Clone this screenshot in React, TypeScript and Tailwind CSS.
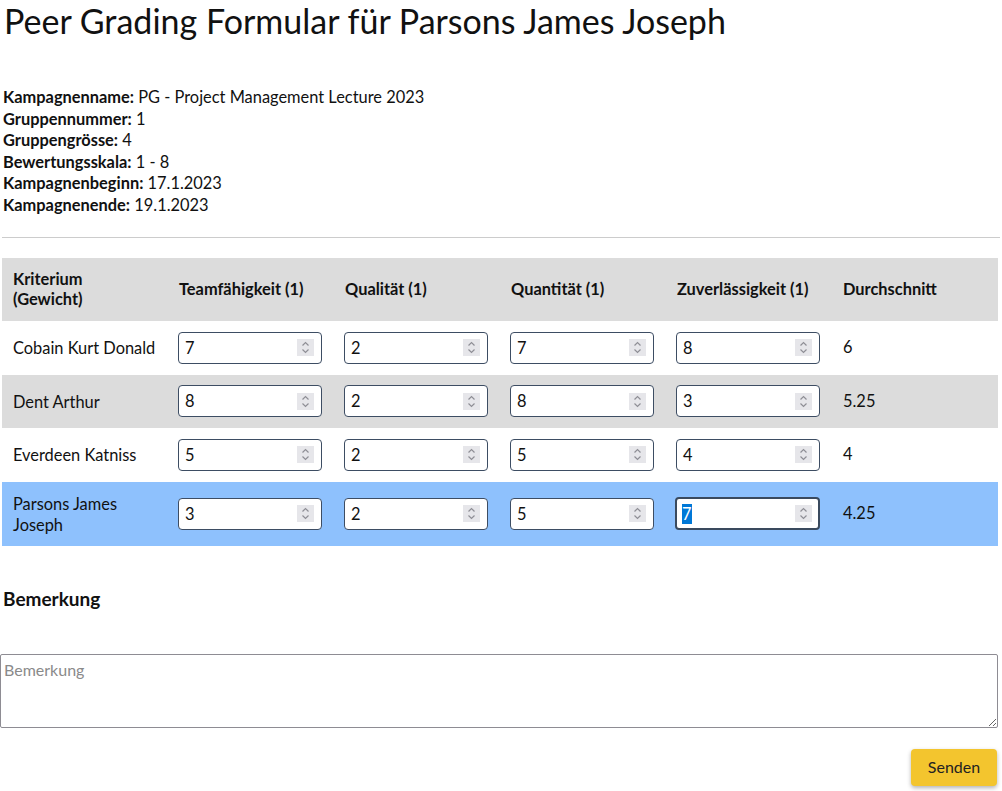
import React from "react";

interface Row {
  name: string;
  scores: number[];
  avg: string;
  variant: "white" | "gray" | "active";
}

const rows: Row[] = [
  { name: "Cobain Kurt Donald", scores: [7, 2, 7, 8], avg: "6", variant: "white" },
  { name: "Dent Arthur", scores: [8, 2, 8, 3], avg: "5.25", variant: "gray" },
  { name: "Everdeen Katniss", scores: [5, 2, 5, 4], avg: "4", variant: "white" },
  { name: "Parsons James Joseph", scores: [3, 2, 5, 7], avg: "4.25", variant: "active" },
];

const criteria = ["Teamfähigkeit (1)", "Qualität (1)", "Quantität (1)", "Zuverlässigkeit (1)"];

const info: [string, string][] = [
  ["Kampagnenname:", "PG - Project Management Lecture 2023"],
  ["Gruppennummer:", "1"],
  ["Gruppengrösse:", "4"],
  ["Bewertungsskala:", "1 - 8"],
  ["Kampagnenbeginn:", "17.1.2023"],
  ["Kampagnenende:", "19.1.2023"],
];

function Spinner() {
  return (
    <span className="flex h-[17px] w-[17px] items-center justify-center bg-[#e6e6ea]">
      <svg width="9" height="13" viewBox="0 0 9 13" fill="none" stroke="#8f8f96" strokeWidth="1.2">
        <path d="M1.5 4.5 L4.5 1.5 L7.5 4.5" />
        <path d="M1.5 8.5 L4.5 11.5 L7.5 8.5" />
      </svg>
    </span>
  );
}

function NumberBox({ value, focused }: { value: number; focused?: boolean }) {
  return (
    <div
      className={
        focused
          ? "flex h-[33px] w-[145px] items-center justify-between rounded-[4px] border-2 border-[#3a4a5e] bg-white pl-[5px] pr-[6px]"
          : "flex h-[32px] w-[144px] items-center justify-between rounded-[4px] border border-[#3d4d63] bg-white pl-[6px] pr-[7px]"
      }
    >
      {focused ? (
        <span className="bg-[#0078d7] leading-[20px] text-white">{value}</span>
      ) : (
        <span className="leading-[20px]">{value}</span>
      )}
      <Spinner />
    </div>
  );
}

export default function App() {
  return (
    <div className="min-h-[791px] bg-white font-['Lato','Noto_Sans',sans-serif] text-[16.4px] text-[#111]">
      <h1 className="pl-[4px] text-[34px] leading-[42px]">
        Peer Grading Formular für Parsons James Joseph
      </h1>

      <div className="mt-[44px] pl-[3px] leading-[21.6px]">
        {info.map(([label, value]) => (
          <div key={label}>
            <span className="font-bold">{label}</span> {value}
          </div>
        ))}
      </div>

      <hr className="mx-[2px] mt-[21px] border-t border-[#cccccc]" />

      <div className="mx-[2px] mt-[20px] w-[996px]">
        <div className="grid h-[63px] grid-cols-[repeat(6,166px)] items-center bg-[#dcdcdc] font-bold leading-[20px]">
          <div className="pl-[11px]">
            Kriterium
            <br />
            (Gewicht)
          </div>
          {criteria.map((c) => (
            <div key={c} className="pl-[11px]">
              {c}
            </div>
          ))}
          <div className="pl-[11px]">Durchschnitt</div>
        </div>

        {rows.map((r) => (
          <div
            key={r.name}
            className={
              r.variant === "gray"
                ? "grid h-[53px] grid-cols-[repeat(6,166px)] items-center bg-[#dcdcdc]"
                : r.variant === "active"
                ? "grid h-[64px] grid-cols-[repeat(6,166px)] items-center bg-[#8ec1fd]"
                : "grid h-[54px] grid-cols-[repeat(6,166px)] items-center bg-white"
            }
          >
            <div className="pl-[11px] pr-[6px] leading-[21px]">{r.name}</div>
            {r.scores.map((s, i) => (
              <div key={i} className={r.variant === "active" && i === 3 ? "pl-[9px]" : "pl-[10px]"}>
                <NumberBox value={s} focused={r.variant === "active" && i === 3} />
              </div>
            ))}
            <div className="pl-[11px]">{r.avg}</div>
          </div>
        ))}
      </div>

      <h2 className="mt-[41px] pl-[3px] text-[19px] font-bold leading-[24px]">Bemerkung</h2>

      <textarea
        placeholder="Bemerkung"
        className="mt-[43px] block h-[74px] w-[998px] rounded-[2px] border border-[#8e8c93] px-[3px] pt-[3px] text-[16px] placeholder:text-[#8a8a8a]"
      />

      <div className="mt-[21px] flex justify-end pr-[5px]">
        <button className="h-[37px] w-[86px] rounded-[4px] bg-[#f3c52e] text-[16px] text-[#222] shadow-[0_2px_4px_rgba(0,0,0,0.3)]">
          Senden
        </button>
      </div>
    </div>
  );
}
